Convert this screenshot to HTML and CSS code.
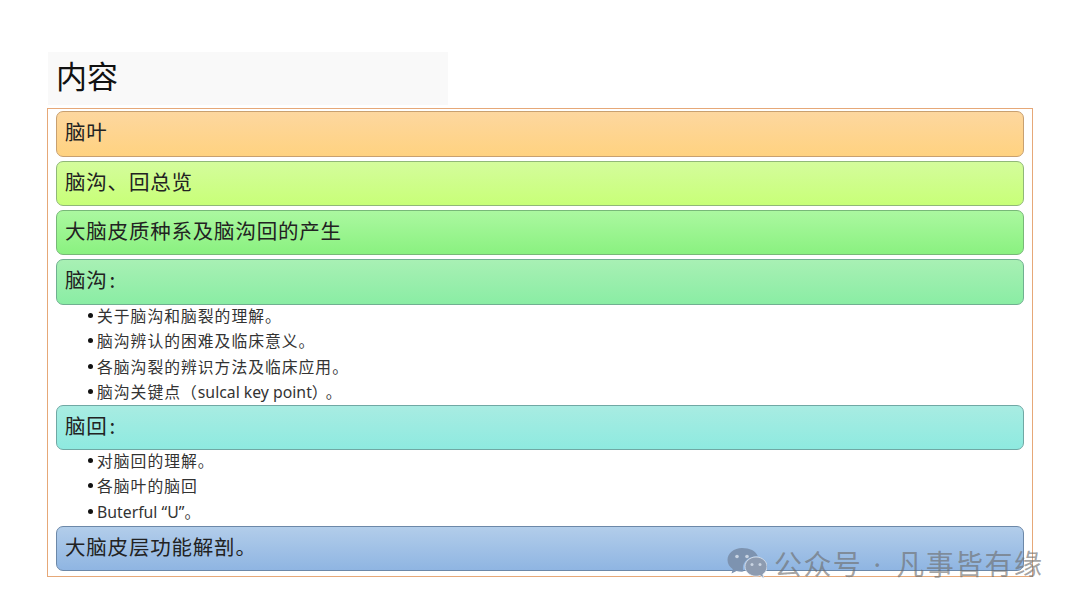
FILE: index.html
```html
<!DOCTYPE html>
<html lang="zh">
<head>
<meta charset="utf-8">
<title>内容</title>
<link rel="stylesheet" href="styles.css">
</head>
<body>
<main class="slide">
  <h1 class="title">内容</h1>
  <section class="frame">
    <div class="bar bar-orange">脑叶</div>
    <div class="bar bar-lime">脑沟、回总览</div>
    <div class="bar bar-green">大脑皮质种系及脑沟回的产生</div>
    <div class="bar bar-mint">脑沟<span class="colon">:</span></div>
    <ul class="items">
      <li><span>关于脑沟和脑裂的理解。</span></li>
      <li><span>脑沟辨认的困难及临床意义。</span></li>
      <li><span>各脑沟裂的辨识方法及临床应用。</span></li>
      <li><span>脑沟关键点（<span class="latin">sulcal key point</span><span class="paren">）</span>。</span></li>
    </ul>
    <div class="bar bar-teal">脑回<span class="colon">:</span></div>
    <ul class="items">
      <li><span>对脑回的理解。</span></li>
      <li><span>各脑叶的脑回</span></li>
      <li><span><span class="latin">Buterful “U”</span>。</span></li>
    </ul>
    <div class="bar bar-blue">大脑皮层功能解剖。</div>
  </section>
  <div class="watermark">
    <svg class="wechat" viewBox="0 0 40 33" width="40" height="33" aria-hidden="true">
      <path class="wc-back" d="M15 1C7 1 .5 6.300 .5 13c0 3.800 2.100 7 5.300 9.200L4.500 26.500l5-2.600c1.700.5 3.400.8 5.500.8.500 0 1 0 1.500-.1-.4-1.200-.6-2.400-.6-3.700 0-6.500 6.100-11.700 13.700-11.700.4 0 .9 0 1.300.1C29 3.900 22.600 1 15 1z"/>
      <circle class="wc-eye" cx="10" cy="9.500" r="1.800"/>
      <circle class="wc-eye" cx="20" cy="9.500" r="1.800"/>
      <path class="wc-front" d="M29 10c-6 0-11 4.300-11 9.600s5 9.600 11 9.600c1.400 0 2.700-.2 3.900-.6l3.900 2.300-1-3.600c2.600-1.800 4.200-4.600 4.200-7.700C40 14.300 35 10 29 10z"/>
      <circle class="wc-eye" cx="25" cy="17.500" r="1.500"/>
      <circle class="wc-eye" cx="33" cy="17.500" r="1.500"/>
    </svg>
    <span class="wm-text">公众号<span class="wm-dot"> · </span>凡事皆有缘</span>
  </div>
</main>
</body>
</html>
```
FILE: styles.css
```css
* { box-sizing: border-box; }
html, body { margin: 0; padding: 0; background: #fff; }
body { font-family: "Noto Sans CJK SC", "Noto Sans", sans-serif; color: #222; }

.slide {
  position: relative;
  width: 1080px;
  height: 608px;
  padding: 52px 47px 0;
  overflow: hidden;
}

.title {
  width: 400px;
  height: 53px;
  margin: 0 0 3px 1px;
  padding-left: 8px;
  background: #f9f9f9;
  font-size: 31px;
  font-weight: 400;
  line-height: 45px;
  color: #111;
}

.frame {
  width: 986px;
  height: 469px;
  padding: 2px 8px 0;
  border: 1px solid #e6a878;
  display: flex;
  flex-direction: column;
}

.bar {
  flex: none;
  height: 45px;
  margin-bottom: 4px;
  padding-left: 8px;
  border: 1px solid #8a9a80;
  border-radius: 7px;
  font-size: 20.500px;
  line-height: 39px;
  letter-spacing: .8px;
}
.colon { margin-left: 2px; }
.bar-orange { height: 46px; background: linear-gradient(#fdd79f, #ffd280); border-color: #c8a070; }
.bar-lime { background: linear-gradient(#d4fc9c, #c8ff78); border-color: #90b878; }
.bar-green { background: linear-gradient(#abf8a0, #8af180); border-color: #78b878; }
.bar-mint { height: 46px; background: linear-gradient(#a8f0b4, #8aeda4); border-color: #70b090; margin-bottom: 0; }
.bar-teal { background: linear-gradient(#a8ece2, #8eeae0); border-color: #70a8a4; margin-bottom: 0; }
.bar-blue { margin-top: auto; margin-bottom: 5px; background: linear-gradient(#b2cdea, #8fb5e2); border-color: #6c88a8; }

.items {
  flex: none;
  margin: -2px 0 .800px;
  padding: 0 0 0 32px;
  list-style: none;
  font-size: 15.800px;
  line-height: 25.300px;
  letter-spacing: 1px;
  color: #333;
}
.items li { display: flex; height: 25.300px; white-space: pre; }
.items li::before {
  content: "";
  flex: none;
  width: 5px;
  height: 5px;
  margin: 10px 4px 0 0;
  border-radius: 50%;
  background: #111;
}
.latin { font-family: "Noto Sans", sans-serif; letter-spacing: 0; line-height: 1; }
.paren { letter-spacing: 6px; }

.watermark {
  position: absolute;
  left: 727px;
  top: 545px;
  display: flex;
  align-items: center;
  gap: 7px;
}
.wechat { flex: none; }
.wc-back { fill: #7d93b0; }
.wc-front { fill: #8d9bb0; stroke: #dfe6ee; stroke-width: .8; }
.wc-eye { fill: #c9d4e2; }
.wm-text {
  font-size: 28px;
  line-height: 36px;
  letter-spacing: 1.400px;
  color: rgba(110, 110, 110, .65);
  white-space: pre;
}
.wm-dot { font-family: "Noto Sans", sans-serif; letter-spacing: 4px; }
```
